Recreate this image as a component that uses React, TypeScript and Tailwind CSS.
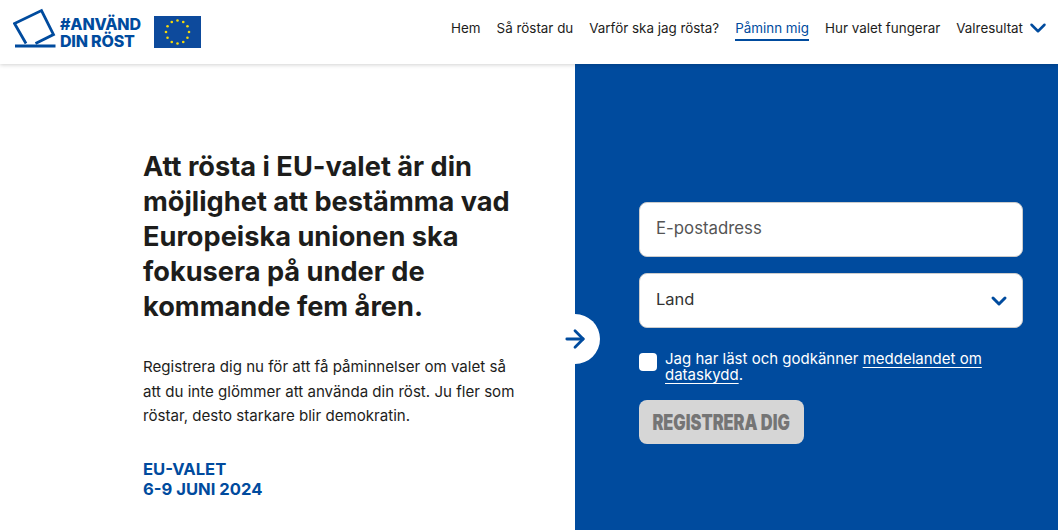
import { ArrowRight, ChevronDown } from "lucide-react";

const navItems = ["Hem", "Så röstar du", "Varför ska jag rösta?", "Påminn mig", "Hur valet fungerar"];

function VoteLogo() {
  return (
    <svg width="44" height="48" viewBox="13 8 44 48" fill="none" className="shrink-0">
      <path d="M26 43.5 L14.5 23.5 L41.5 10.5 L53.5 34.5 L35.5 43.5" stroke="#004b9e" strokeWidth="2.8" strokeLinejoin="miter" />
      <path d="M15 46 H55.5" stroke="#004b9e" strokeWidth="2.8" />
    </svg>
  );
}

function EuFlag() {
  const stars = Array.from({ length: 12 }, (_, i) => {
    const a = (i * Math.PI) / 6;
    return { x: 23.5 + Math.sin(a) * 11.5, y: 16 - Math.cos(a) * 11.5 };
  });
  return (
    <svg width="47" height="32" viewBox="0 0 47 32" className="shrink-0">
      <rect width="47" height="32" fill="#0d4a9c" />
      {stars.map((s, i) => (
        <circle key={i} cx={s.x} cy={s.y} r="1.3" fill="#f5d90a" />
      ))}
    </svg>
  );
}

export default function App() {
  return (
    <div className="h-[530px] overflow-hidden bg-white font-['Inter',sans-serif] text-[#1d1d1b]">
      {/* Header */}
      <header className="relative z-10 flex h-[64px] items-center justify-between pl-[13px] pr-[7px] shadow-[0_1px_4px_rgba(0,0,0,0.18)]">
        <div className="flex items-center">
          <VoteLogo />
          <div className="ml-[3px] mt-[1px] text-[16px] font-extrabold leading-[17px] tracking-[-0.2px] text-[#004b9e]">
            <div>#ANVÄND</div>
            <div>DIN RÖST</div>
          </div>
          <div className="ml-[13px]">
            <EuFlag />
          </div>
        </div>
        <nav className="mt-[-6px] flex items-center gap-[16px] text-[13.4px]">
          {navItems.map((item) =>
            item === "Påminn mig" ? (
              <a key={item} className="border-b-2 border-[#004b9e] leading-[22px] text-[#004b9e]">
                {item}
              </a>
            ) : (
              <a key={item} className="border-b-2 border-transparent leading-[22px]">
                {item}
              </a>
            ),
          )}
          <span className="flex items-center gap-[2px] border-b-2 border-transparent leading-[22px]">
            Valresultat
            <ChevronDown size={26} strokeWidth={2.3} className="text-[#004b9e]" />
          </span>
        </nav>
      </header>

      <main className="flex h-[466px]">
        {/* Left column */}
        <section className="w-[575px] shrink-0 pl-[143px] pr-[58px] pt-[85px]">
          <h1 className="text-[27.2px] font-bold leading-[35px]">
            Att rösta i EU-valet är din möjlighet att bestämma vad Europeiska unionen ska fokusera på under de kommande fem åren.
          </h1>
          <p className="mt-[31px] text-[15.1px] leading-[24.5px]">
            Registrera dig nu för att få påminnelser om valet så att du inte glömmer att använda din röst. Ju fler som röstar, desto starkare blir demokratin.
          </p>
          <div className="mt-[30px] text-[16.6px] font-bold leading-[20px] text-[#004b9e]">
            <div>EU-VALET</div>
            <div>6-9 JUNI 2024</div>
          </div>
        </section>

        {/* Form panel */}
        <section className="relative flex-1 bg-[#004b9e] pl-[64px] pr-[35px] pt-[138px]">
          <div className="absolute left-[-25px] top-[250px] flex h-[50px] w-[50px] items-center justify-center rounded-full bg-white">
            <ArrowRight size={28} strokeWidth={2.4} className="text-[#004b9e]" />
          </div>
          <div className="flex h-[55px] items-center rounded-lg border border-[#ccc] bg-white px-[16px] pb-[1px] text-[16.8px] text-[#555]">
            E-postadress
          </div>
          <div className="mt-[16px] flex h-[55px] items-center justify-between rounded-lg border border-[#ccc] bg-white pl-[16px] pr-[11px] text-[16.5px] text-[#333]">
            <span className="pb-[3px]">Land</span>
            <ChevronDown size={24} strokeWidth={3} className="text-[#004b9e]" />
          </div>
          <div className="mt-[23px] flex text-white">
            <span className="mt-[2px] h-[18px] w-[18px] shrink-0 rounded bg-white" />
            <p className="ml-[8px] text-[15px] leading-[16px] [text-underline-offset:3px]">
              Jag har läst och godkänner <a className="underline">meddelandet om dataskydd</a>.
            </p>
          </div>
          <button className="mt-[17px] flex h-[44px] w-[165px] items-center justify-center rounded-lg bg-[#d6d6d6] pt-[1px] text-[21px] font-black text-[#757575]">
            <span className="scale-x-[0.78] whitespace-nowrap">REGISTRERA DIG</span>
          </button>
        </section>
      </main>
    </div>
  );
}
